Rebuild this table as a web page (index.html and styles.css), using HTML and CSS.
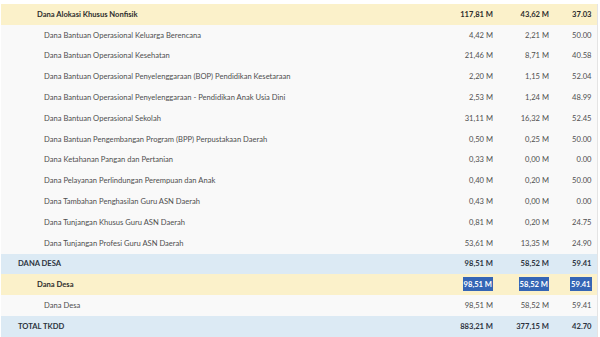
FILE: index.html
```html
<!DOCTYPE html>
<html lang="id">
<head>
<meta charset="utf-8">
<title>TKDD</title>
<link rel="stylesheet" href="styles.css">
</head>
<body>
<div class="wrap">
<table class="tkdd">
<colgroup>
<col class="c-name">
<col class="c-num1">
<col class="c-num2">
<col class="c-pct">
</colgroup>
<tbody>
<tr class="sub"><td class="lv2">Dana Alokasi Khusus Nonfisik</td><td>117,81 M</td><td>43,62 M</td><td>37.03</td></tr>
<tr class="item"><td class="lv3">Dana Bantuan Operasional Keluarga Berencana</td><td>4,42 M</td><td>2,21 M</td><td>50.00</td></tr>
<tr class="item"><td class="lv3">Dana Bantuan Operasional Kesehatan</td><td>21,46 M</td><td>8,71 M</td><td>40.58</td></tr>
<tr class="item"><td class="lv3">Dana Bantuan Operasional Penyelenggaraan (BOP) Pendidikan Kesetaraan</td><td>2,20 M</td><td>1,15 M</td><td>52.04</td></tr>
<tr class="item"><td class="lv3">Dana Bantuan Operasional Penyelenggaraan - Pendidikan Anak Usia Dini</td><td>2,53 M</td><td>1,24 M</td><td>48.99</td></tr>
<tr class="item"><td class="lv3">Dana Bantuan Operasional Sekolah</td><td>31,11 M</td><td>16,32 M</td><td>52.45</td></tr>
<tr class="item"><td class="lv3">Dana Bantuan Pengembangan Program (BPP) Perpustakaan Daerah</td><td>0,50 M</td><td>0,25 M</td><td>50.00</td></tr>
<tr class="item"><td class="lv3">Dana Ketahanan Pangan dan Pertanian</td><td>0,33 M</td><td>0,00 M</td><td>0.00</td></tr>
<tr class="item"><td class="lv3">Dana Pelayanan Perlindungan Perempuan dan Anak</td><td>0,40 M</td><td>0,20 M</td><td>50.00</td></tr>
<tr class="item"><td class="lv3">Dana Tambahan Penghasilan Guru ASN Daerah</td><td>0,43 M</td><td>0,00 M</td><td>0.00</td></tr>
<tr class="item"><td class="lv3">Dana Tunjangan Khusus Guru ASN Daerah</td><td>0,81 M</td><td>0,20 M</td><td>24.75</td></tr>
<tr class="item"><td class="lv3">Dana Tunjangan Profesi Guru ASN Daerah</td><td>53,61 M</td><td>13,35 M</td><td>24.90</td></tr>
<tr class="group"><td class="lv1">DANA DESA</td><td>98,51 M</td><td>58,52 M</td><td>59.41</td></tr>
<tr class="sub"><td class="lv2">Dana Desa</td><td><span class="sel">98,51 M</span></td><td><span class="sel">58,52 M</span></td><td><span class="sel">59.41</span></td></tr>
<tr class="item"><td class="lv3">Dana Desa</td><td>98,51 M</td><td>58,52 M</td><td>59.41</td></tr>
<tr class="group"><td class="lv1">TOTAL TKDD</td><td>883,21 M</td><td>377,15 M</td><td>42.70</td></tr>
</tbody>
</table>
</div>
</body>
</html>
```

FILE: styles.css
```css
html, body {
  margin: 0;
  padding: 0;
  background: #ffffff;
}
.wrap {
  padding: 4px 0 0 1px;
}
.tkdd {
  width: 596px;
  border-collapse: collapse;
  table-layout: fixed;
  font-family: "Lato", "Liberation Sans", sans-serif;
  font-size: 7.6px;
  color: #4f4f4f;
  border-right: 1px solid #e4e4e4;
}
.c-name { width: 449px; }
.c-num1 { width: 47px; }
.c-num2 { width: 56px; }
.c-pct { width: 44px; }
.tkdd tr {
  height: 20.8px;
}
.tkdd td {
  padding: 0 4px 0 0;
  text-align: right;
  white-space: nowrap;
  vertical-align: middle;
  line-height: 9px;
}
.tkdd td:last-child {
  padding-right: 5px;
}
.tkdd td:first-child {
  text-align: left;
}
.lv1 { padding-left: 17px !important; }
.lv2 { padding-left: 36px !important; }
.lv3 { padding-left: 43px !important; }
.item { background: #f9f9f9; }
.sub { background: #fbf1ca; }
.sub td { font-weight: 700; color: #2d2d2d; }
.group { background: #dceaf4; }
.group td { font-weight: 700; color: #2d3440; }
.sel {
  background: #3565b5;
  color: #ffffff;
  padding: 2px 1px;
}
```
